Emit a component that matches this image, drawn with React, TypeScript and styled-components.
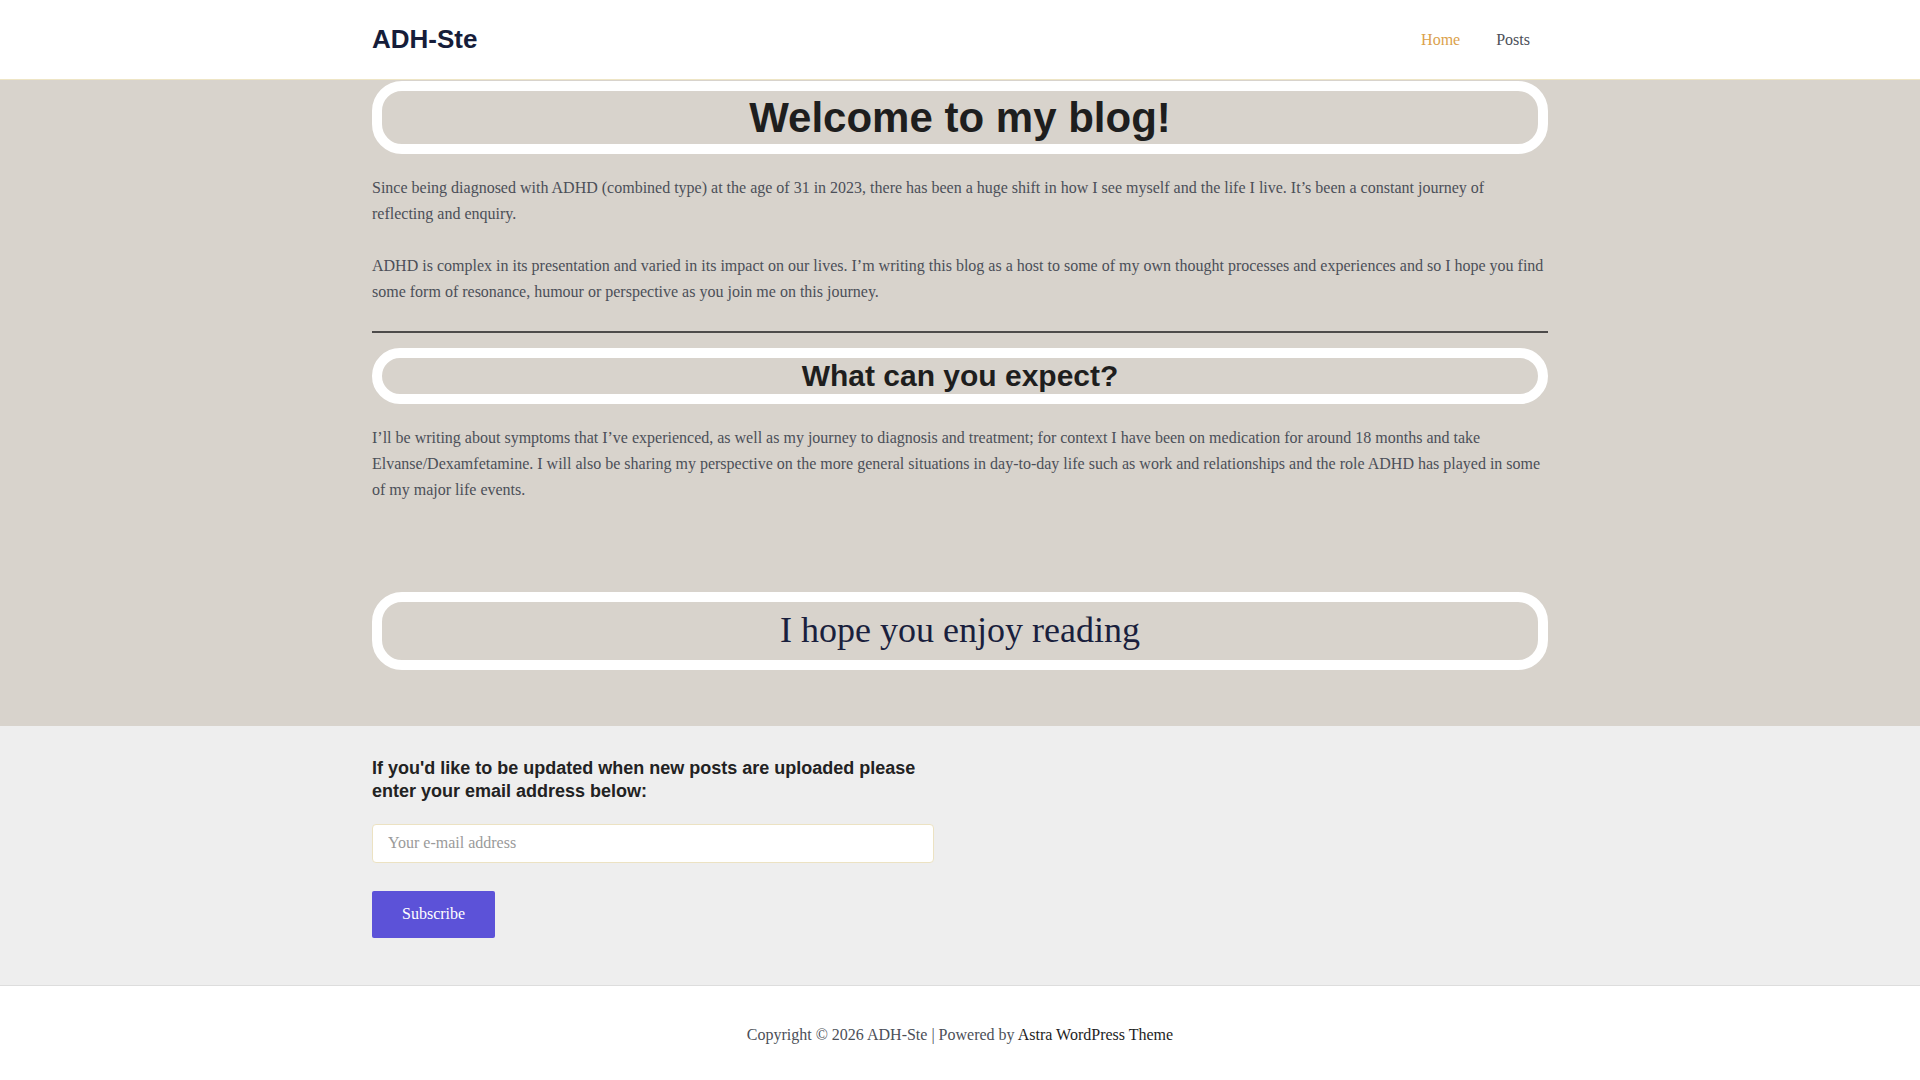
import * as React from 'react'

import styled, { createGlobalStyle } from 'styled-components'

const GlobalStyle = createGlobalStyle`
  * {
    box-sizing: border-box;
  }
  body {
    margin: 0;
    background: #ffffff;
    font-family: 'Liberation Serif', 'Times New Roman', serif;
    font-size: 16px;
    line-height: 1.6;
    color: #4b4f58;
  }
`

const navItems = [
  { label: 'Home', active: true },
  { label: 'Posts', active: false },
]

export default function App() {
  return (
    <>
      <GlobalStyle />
      <Header>
        <Container>
          <HeaderRow>
            <Logo>ADH-Ste</Logo>
            <Nav>
              {navItems.map(item => (
                <NavLink key={item.label} $active={item.active}>
                  {item.label}
                </NavLink>
              ))}
            </Nav>
          </HeaderRow>
        </Container>
      </Header>

      <Main>
        <Container>
          <Pill $size='large'>
            <SansHeading $size={42} $line={53}>
              Welcome to my blog!
            </SansHeading>
          </Pill>
          <Para>
            Since being diagnosed with ADHD (combined type) at the age of 31 in
            2023, there has been a huge shift in how I see myself and the life I
            live. It’s been a constant journey of reflecting and enquiry.
          </Para>
          <Para>
            ADHD is complex in its presentation and varied in its impact on our
            lives. I’m writing this blog as a host to some of my own thought
            processes and experiences and so I hope you find some form of
            resonance, humour or perspective as you join me on this journey.
          </Para>
          <Separator />
          <Pill $size='medium'>
            <SansHeading $size={30} $line={36}>
              What can you expect?
            </SansHeading>
          </Pill>
          <Para>
            I’ll be writing about symptoms that I’ve experienced, as well as my
            journey to diagnosis and treatment; for context I have been on
            medication for around 18 months and take Elvanse/Dexamfetamine. I
            will also be sharing my perspective on the more general situations
            in day-to-day life such as work and relationships and the role ADHD
            has played in some of my major life events.
          </Para>
          <Spacer />
          <Pill $size='large'>
            <SerifHeading>I hope you enjoy reading</SerifHeading>
          </Pill>
        </Container>
      </Main>

      <Subscribe>
        <Container>
          <SubscribeColumn>
            <SubscribeTitle>
              If you'd like to be updated when new posts are uploaded please
              enter your email address below:
            </SubscribeTitle>
            <EmailInput type='email' placeholder='Your e-mail address' />
            <SubscribeButton type='button'>Subscribe</SubscribeButton>
          </SubscribeColumn>
        </Container>
      </Subscribe>

      <Footer>
        Copyright © 2026 ADH-Ste | Powered by{' '}
        <FooterLink>Astra WordPress Theme</FooterLink>
      </Footer>
    </>
  )
}

const Container = styled.div`
  width: 1176px;
  margin: 0 auto;
`
const Header = styled.header`
  height: 80px;
  border-bottom: 1px solid #eee5c5;
  background: #ffffff;
`
const HeaderRow = styled.div`
  height: 79px;
  display: flex;
  align-items: center;
  justify-content: space-between;
`
const Logo = styled.a`
  font-family: 'Liberation Sans', Arial, sans-serif;
  font-size: 26px;
  font-weight: 700;
  line-height: 1.2;
  color: #161d3a;
  text-decoration: none;
`
const Nav = styled.nav`
  display: flex;
`
const NavLink = styled.a<{ $active: boolean }>`
  padding: 0 18px;
  font-size: 16px;
  line-height: 79px;
  color: ${p => (p.$active ? '#dba24c' : '#4b4f58')};
  text-decoration: none;
  cursor: pointer;
`
const Main = styled.main`
  background: #d8d3cc;
  padding: 1px 0 56px;
`
const Pill = styled.div<{ $size: 'large' | 'medium' }>`
  border: 10px solid #ffffff;
  border-radius: ${p => (p.$size === 'large' ? '30px' : '28px')};
  text-align: center;
`
const SansHeading = styled.h2<{ $size: number; $line: number }>`
  margin: 0;
  font-family: 'Liberation Sans', Arial, sans-serif;
  font-weight: 700;
  font-size: ${p => p.$size}px;
  line-height: ${p => p.$line}px;
  color: #1e1e1e;
`
const SerifHeading = styled.h2`
  margin: 0;
  font-family: 'Liberation Serif', 'Times New Roman', serif;
  font-weight: 400;
  font-size: 36px;
  line-height: 1.6;
  color: #1a1f3d;
`
const Para = styled.p`
  margin: 21px 0 0;
  & + & {
    margin-top: 27px;
  }
`
const Separator = styled.hr`
  margin: 27px 0 15px;
  border: none;
  border-top: 2px solid #4d4b4a;
`
const Spacer = styled.div`
  height: 90px;
`
const Subscribe = styled.section`
  background: #eeeeee;
  padding: 31px 0 47px;
  border-bottom: 1px solid #dddddd;
`
const SubscribeColumn = styled.div`
  width: 562px;
  display: flex;
  flex-direction: column;
  align-items: flex-start;
`
const SubscribeTitle = styled.h3`
  margin: 0 0 21px;
  font-family: 'Liberation Sans', Arial, sans-serif;
  font-weight: 700;
  font-size: 18px;
  line-height: 23px;
  color: #222222;
`
const EmailInput = styled.input`
  width: 100%;
  height: 39px;
  padding: 0 15px;
  border: 1px solid #ece2c2;
  border-radius: 4px;
  background: #ffffff;
  font-family: 'Liberation Serif', 'Times New Roman', serif;
  font-size: 16px;
  color: #4b4f58;
  outline: none;
  &::placeholder {
    color: #9a9a9a;
  }
`
const SubscribeButton = styled.button`
  margin-top: 28px;
  height: 47px;
  padding: 0 30px;
  border: none;
  border-radius: 2px;
  background: #5c52d8;
  font-family: 'Liberation Serif', 'Times New Roman', serif;
  font-size: 16px;
  color: #ffffff;
  cursor: pointer;
`
const Footer = styled.footer`
  padding: 36px 0 32px;
  text-align: center;
  font-size: 16px;
  color: #4b4f58;
`
const FooterLink = styled.a`
  color: #1e1e1e;
  text-decoration: none;
`
